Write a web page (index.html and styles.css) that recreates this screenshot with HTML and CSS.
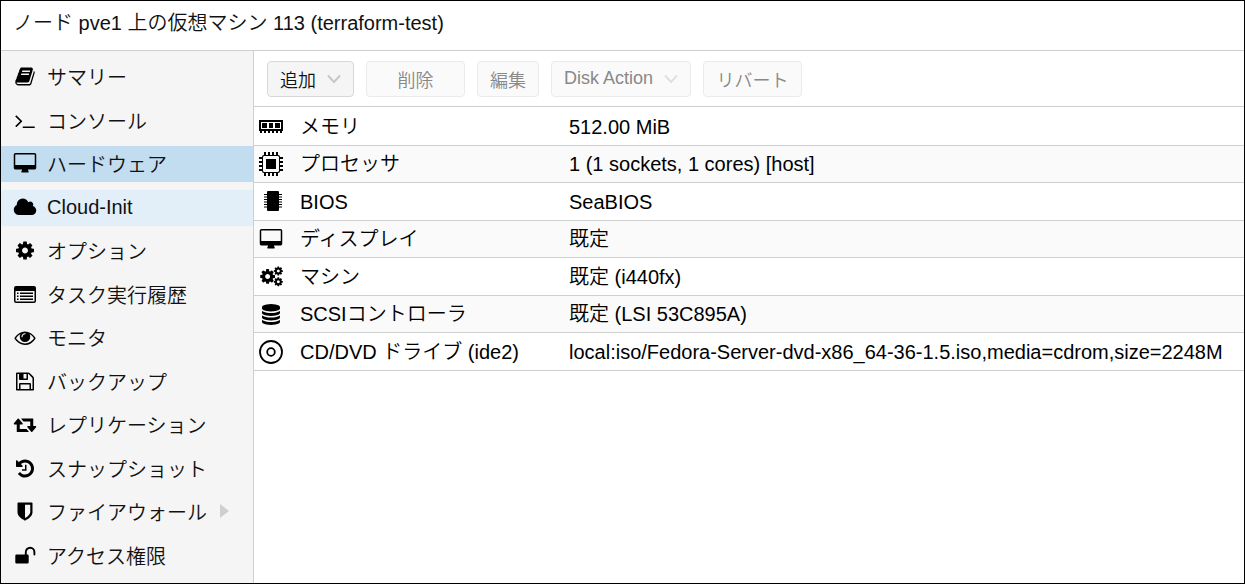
FILE: index.html
```html
<!DOCTYPE html>
<html lang="ja">

<head>
	<meta charset="utf-8">
	<title>pve1 - 113 (terraform-test)</title>
	<link rel="stylesheet" href="styles.css">
</head>

<body>

	<!-- icon sprite -->
	<svg class="sprite" aria-hidden="true">
		<symbol id="book" viewBox="-128 0 2048 1792"><path d="M1703 478q40 57 18 129l-275 906q-19 64-76.5 107.5t-122.5 43.5h-923q-77 0-148.5-53.5t-99.5-131.5q-24-67-2-127 0-4 3-27t4-37q1-8-3-21.5t-3-19.5q2-11 8-21t16.5-23.5 16.5-23.5q23-38 45-91.5t30-91.5q3-10 .5-30t-.5-28q3-11 17-28t17-23q21-36 42-92t25-90q1-9-2.5-32t.5-28q4-13 22-30.5t22-22.5q19-26 42.5-84.5t27.5-96.5q1-8-3-25.5t-2-26.5q2-8 9-18t18-23 17-21q8-12 16.5-30.5t15-35 16-36 19.5-32 26.5-23.5 36-11.5 47.5 5.5l-1 3q38-9 51-9h761q74 0 114 56t18 130l-274 906q-36 119-71.5 153.5t-128.5 34.5h-869q-27 0-38 15-11 16-1 43 24 70 144 70h923q29 0 56-15.5t35-41.5l300-987q7-22 5-57 38 15 59 43zm-1064 2q-4 13 2 22.5t20 9.5h608q13 0 25.5-9.5t16.5-22.5l21-64q4-13-2-22.5t-20-9.5h-608q-13 0-25.5 9.5t-16.5 22.5zm-83 256q-4 13 2 22.5t20 9.5h608q13 0 25.5-9.5t16.5-22.5l21-64q4-13-2-22.5t-20-9.5h-608q-13 0-25.5 9.5t-16.5 22.5z"/></symbol>
		<symbol id="terminal" viewBox="-128 0 2048 1792"><path d="M649 983l-466 466q-10 10-23 10t-23-10l-50-50q-10-10-10-23t10-23l393-393-393-393q-10-10-10-23t10-23l50-50q10-10 23-10t23 10l466 466q10 10 10 23t-10 23zm1079 457v64q0 14-9 23t-23 9h-960q-14 0-23-9t-9-23v-64q0-14 9-23t23-9h960q14 0 23 9t9 23z"/></symbol>
		<symbol id="desktop" viewBox="-64 0 2048 1792"><path d="M1792 992v-832q0-13-9.5-22.5t-22.5-9.5h-1600q-13 0-22.5 9.5t-9.5 22.5v832q0 13 9.5 22.5t22.5 9.5h1600q13 0 22.5-9.5t9.5-22.5zm128-832v1088q0 66-47 113t-113 47h-544q0 37 16 77.5t32 71 16 43.5q0 26-19 45t-45 19h-512q-26 0-45-19t-19-45q0-14 16-44t32-70 16-78h-544q-66 0-113-47t-47-113v-1088q0-66 47-113t113-47h1600q66 0 113 47t47 113z"/></symbol>
		<symbol id="cloud" viewBox="0 0 2048 1792"><path d="M1984 1152q0 159-112.5 271.5t-271.5 112.5h-1088q-185 0-316.5-131.5t-131.5-316.5q0-132 71-241.5t187-163.5q-2-28-2-43 0-212 150-362t362-150q158 0 286.5 88t187.5 230q70-62 166-62 106 0 181 75t75 181q0 75-41 138 129 30 213 134.5t84 239.5z"/></symbol>
		<symbol id="cog" viewBox="-128 0 2048 1792"><path id="gear" d="M1152 896q0-106-75-181t-181-75-181 75-75 181 75 181 181 75 181-75 75-181zm512-109v222q0 12-8 23t-20 13l-185 28q-19 54-39 91 35 50 107 138 10 12 10 25t-9 23q-27 37-99 108t-94 71q-12 0-26-9l-138-108q-44 23-91 38-16 136-29 186-7 28-36 28h-222q-14 0-24.5-8.5t-11.5-21.5l-28-184q-49-16-90-37l-141 107q-10 9-25 9-14 0-25-11-126-114-165-168-7-10-7-23 0-12 8-23 15-21 51-66.5t54-70.5q-27-50-41-99l-183-27q-13-2-21-12.5t-8-23.5v-222q0-12 8-23t19-13l186-28q14-46 39-92-40-57-107-138-10-12-10-24 0-10 9-23 26-36 98.5-107.5t94.5-71.5q13 0 26 10l138 107q44-23 91-38 16-136 29-186 7-28 36-28h222q14 0 24.5 8.5t11.5 21.5l28 184q49 16 90 37l142-107q9-9 24-9 13 0 25 10 129 119 165 170 7 8 7 22 0 12-8 23-15 21-51 66.5t-54 70.5q26 50 41 98l183 28q13 2 21 12.5t8 23.5z"/></symbol>
		<symbol id="cogs" viewBox="0 0 2048 1792">
			<use href="#gear" transform="translate(0 160) scale(.82)"/>
			<use href="#gear" transform="translate(1200 -20) scale(.5)"/>
			<use href="#gear" transform="translate(1200 900) scale(.5)"/>
		</symbol>
		<symbol id="list" viewBox="0 0 24 21"><path fill-rule="evenodd" d="M3 2h18q2 0 2 2v13q0 2-2 2H3q-2 0-2-2V4q0-2 2-2zm-.5 5v10q0 .6.6.6h17.8q.6 0 .6-.6V7zM4 8.500h1.500V10H4zm3 0h13V10H7zM4 11.500h1.500V13H4zm3 0h13V13H7zM4 14.500h1.500V16H4zm3 0h13V16H7z"/></symbol>
		<symbol id="eye" viewBox="-128 0 2048 1792"><path d="M1664 960q-152-236-381-353 61 104 61 225 0 185-131.5 316.500t-316.500 131.500-316.500-131.500-131.500-316.500q0-121 61-225-229 117-381 353 133 205 333.500 326.500t434.500 121.500 434.500-121.500 333.500-326.500zm-720-384q0-20-14-34t-34-14q-125 0-214.500 89.500t-89.500 214.500q0 20 14 34t34 14 34-14 14-34q0-86 61-147t147-61q20 0 34-14t14-34zm848 384q0 34-20 69-140 230-376.500 368.500t-499.500 138.500-499.500-139-376.500-368q-20-35-20-69t20-69q140-229 376.500-368t499.500-139 499.500 139 376.500 368q20 35 20 69z"/></symbol>
		<symbol id="floppy" viewBox="-128 0 2048 1792"><path d="M512 1536h768v-384h-768v384zm896 0h128v-896q0-14-10-38.500t-20-34.500l-281-281q-10-10-34-20t-39-10v416q0 40-28 68t-68 28h-576q-40 0-68-28t-28-68v-416h-128v1280h128v-416q0-40 28-68t68-28h832q40 0 68 28t28 68v416zm-384-928v-320q0-13-9.500-22.500t-22.500-9.500h-192q-13 0-22.500 9.500t-9.500 22.500v320q0 13 9.500 22.500t22.500 9.500h192q13 0 22.500-9.500t9.500-22.500zm640 32v928q0 40-28 68t-68 28h-1344q-40 0-68-28t-28-68v-1344q0-40 28-68t68-28h928q40 0 88 20t76 48l280 280q28 28 48 76t20 88z"/></symbol>
		<symbol id="retweet" viewBox="-64 0 2048 1792"><path d="M1280 1504q0 13-9.500 22.500t-22.500 9.500h-960q-8 0-13.500-2t-9-7-5.500-8-3-11.500-1-11.500v-600h-192q-26 0-45-19t-19-45q0-24 15-41l320-384q19-22 49-22t49 22l320 384q15 17 15 41 0 26-19 45t-45 19h-192v384h576q16 0 25 11l160 192q7 10 7 21zm640-416q0 24-15 41l-320 384q-20 23-49 23t-49-23l-320-384q-15-17-15-41 0-26 19-45t45-19h192v-384h-576q-16 0-25-12l-160-192q-7-9-7-20 0-13 9.500-22.500t22.500-9.500h960q8 0 13.500 2t9 7 5.500 8 3 11.500 1 11.500v600h192q26 0 45 19t19 45z"/></symbol>
		<symbol id="history" viewBox="-128 0 2048 1792"><path d="M1664 896q0 156-61 298t-164 245-245 164-298 61q-172 0-327-72.500t-264-204.500q-7-10-6.500-22.500t8.500-20.500l137-138q10-9 25-9 16 2 23 12 73 95 179 147t225 52q104 0 198.500-40.500t163.500-109.500 109.500-163.500 40.500-198.500-40.500-198.500-109.500-163.500-163.500-109.500-198.500-40.500q-98 0-188 35.500t-160 101.500l137 138q31 30 14 69-17 40-59 40h-448q-26 0-45-19t-19-45v-448q0-42 40-59 39-17 69 14l130 129q107-101 244.500-156.500t284.500-55.500q156 0 298 61t245 164 164 245 61 298zm-640-288v448q0 14-9 23t-23 9h-320q-14 0-23-9t-9-23v-64q0-14 9-23t23-9h224v-352q0-14 9-23t23-9h64q14 0 23 9t9 23z"/></symbol>
		<symbol id="shield" viewBox="-128 0 2048 1792"><path d="M1344 960v-640h-448v1137q119-63 213-137 235-184 235-360zm192-768v768q0 86-33.500 170.500t-83 150-118 127.500-126.500 103-121 77.500-89.500 49.500-42.500 20q-12 6-26 6t-26-6q-16-7-42.500-20t-89.500-49.500-121-77.500-126.500-103-118-127.500-83-150-33.500-170.500v-768q0-26 19-45t45-19h1152q26 0 45 19t19 45z"/></symbol>
		<symbol id="unlock" viewBox="0 0 24 21"><path d="M3.500 9.500h11q1.200 0 1.200 1.200v6.600q0 1.200-1.200 1.200h-11q-1.200 0-1.200-1.200v-6.600q0-1.200 1.200-1.200z"/><path d="M12.800 10V7a4.300 4.300 0 0 1 8.600 0v2.500" fill="none" stroke="#000" stroke-width="1.900" stroke-linecap="round"/></symbol>
		<symbol id="database" viewBox="-128 0 2048 1792"><path d="M896 768q237 0 443-43t325-127v170q0 69-103 128t-280 93.500-385 34.500-385-34.500-280-93.500-103-128v-170q119 84 325 127t443 43zm0 768q237 0 443-43t325-127v170q0 69-103 128t-280 93.500-385 34.500-385-34.500-280-93.500-103-128v-170q119 84 325 127t443 43zm0-384q237 0 443-43t325-127v170q0 69-103 128t-280 93.500-385 34.500-385-34.500-280-93.500-103-128v-170q119 84 325 127t443 43zm0-1152q208 0 385 34.500t280 93.500 103 128v128q0 69-103 128t-280 93.500-385 34.500-385-34.500-280-93.500-103-128v-128q0-69 103-128t280-93.500 385-34.500z"/></symbol>
		<symbol id="memory" viewBox="0 0 24 24"><path fill-rule="evenodd" d="M0 5h24v11h-1v2h-2v-2h-2v2h-2v-2h-2v2h-2v-2h-2v2H9v-2H7v2H5v-2H3v2H1v-2H0zm2 2v7h20V7zm1 1h5v5H3zm7 0h4v5h-4zm6 0h5v5h-5z"/></symbol>
		<symbol id="cpu" viewBox="0 0 24 24"><path fill-rule="evenodd" d="M5 3h14q2 0 2 2v14q0 2-2 2H5q-2 0-2-2V5q0-2 2-2zm0 1-1 1v14l1 1h14l1-1V5l-1-1zM7 7h10v10H7z"/><path d="M6 0v4m4-4v4m4-4v4m4-4v4M6 20v4m4-4v4m4-4v4m4-4v4M0 6h4m-4 4h4m-4 4h4m-4 4h4m16-12h4m-4 4h4m-4 4h4m-4 4h4" stroke="#000" stroke-width="2"/></symbol>
		<symbol id="chip" viewBox="0 0 24 24"><rect x="8" y="1" width="12" height="20" rx="1"/><path d="M5 4.500h18M5 7h18M5 9.500h18M5 12h18M5 14.500h18M5 17h18" stroke="#000" stroke-width="1.100"/></symbol>
		<symbol id="disc" viewBox="0 0 24 24"><g fill="none" stroke="#000" stroke-width="1.800"><circle cx="12" cy="12" r="11"/><circle cx="12" cy="12" r="3.800"/></g></symbol>
		<symbol id="down" viewBox="0 0 14 10"><path d="M1 1.500l6 6.500 6-6.500" fill="none" stroke="currentColor" stroke-width="2"/></symbol>
		<symbol id="right" viewBox="0 0 9 14"><path d="M0 0l9 7-9 7z" fill="currentColor"/></symbol>
	</svg>

	<div class="wrapper">
		<h1 class="title">ノード pve1 上の仮想マシン 113 (terraform-test)</h1>

		<div class="main">
			<nav class="side">
				<a href="#"><svg class="icon"><use href="#book"/></svg>サマリー</a>
				<a href="#"><svg class="icon"><use href="#terminal"/></svg>コンソール</a>
				<a href="#" class="active"><svg class="icon"><use href="#desktop"/></svg>ハードウェア</a>
				<a href="#" class="over"><svg class="icon"><use href="#cloud"/></svg>Cloud-Init</a>
				<a href="#"><svg class="icon"><use href="#cog"/></svg>オプション</a>
				<a href="#"><svg class="icon"><use href="#list"/></svg>タスク実行履歴</a>
				<a href="#"><svg class="icon"><use href="#eye"/></svg>モニタ</a>
				<a href="#"><svg class="icon"><use href="#floppy"/></svg>バックアップ</a>
				<a href="#"><svg class="icon"><use href="#retweet"/></svg>レプリケーション</a>
				<a href="#"><svg class="icon"><use href="#history"/></svg>スナップショット</a>
				<a href="#"><svg class="icon"><use href="#shield"/></svg>ファイアウォール<svg class="more"><use href="#right"/></svg></a>
				<a href="#"><svg class="icon"><use href="#unlock"/></svg>アクセス権限</a>
			</nav>

			<div class="content">
				<div class="toolbar">
					<button class="btn">追加<svg class="arrow"><use href="#down"/></svg></button>
					<button class="btn wide" disabled>削除</button>
					<button class="btn" disabled>編集</button>
					<button class="btn" disabled>Disk Action<svg class="arrow"><use href="#down"/></svg></button>
					<button class="btn wide" disabled>リバート</button>
				</div>

				<table class="grid">
					<tr>
						<th scope="row"><div class="name"><svg class="dev"><use href="#memory"/></svg>メモリ</div></th>
						<td>512.00 MiB</td>
					</tr>
					<tr>
						<th scope="row"><div class="name"><svg class="dev"><use href="#cpu"/></svg>プロセッサ</div></th>
						<td>1 (1 sockets, 1 cores) [host]</td>
					</tr>
					<tr>
						<th scope="row"><div class="name"><svg class="dev"><use href="#chip"/></svg>BIOS</div></th>
						<td>SeaBIOS</td>
					</tr>
					<tr>
						<th scope="row"><div class="name"><svg class="icon"><use href="#desktop"/></svg>ディスプレイ</div></th>
						<td>既定</td>
					</tr>
					<tr>
						<th scope="row"><div class="name"><svg class="icon"><use href="#cogs"/></svg>マシン</div></th>
						<td>既定 (i440fx)</td>
					</tr>
					<tr>
						<th scope="row"><div class="name"><svg class="icon"><use href="#database"/></svg>SCSIコントローラ</div></th>
						<td>既定 (LSI 53C895A)</td>
					</tr>
					<tr>
						<th scope="row"><div class="name"><svg class="dev"><use href="#disc"/></svg>CD/DVD ドライブ (ide2)</div></th>
						<td>local:iso/Fedora-Server-dvd-x86_64-36-1.5.iso,media=cdrom,size=2248M</td>
					</tr>
				</table>
			</div>
		</div>
	</div>

</body>

</html>
```

FILE: styles.css
```css
* {
	padding: 0px;
	margin: 0px;
	box-sizing: border-box;
}

body {
	font-family: "Liberation Sans", "Noto Sans CJK JP", sans-serif;
	font-size: 20px;
	font-weight: 350;
	color: #000;
	background-color: #fff;
}

.sprite {
	position: absolute;
	width: 0px;
	height: 0px;
}

.wrapper {
	display: flex;
	flex-direction: column;
	min-height: 100vh;
	border: 1px solid #000;
}

.title {
	height: 50px;
	padding-left: 12px;
	font-size: 20px;
	font-weight: 350;
	line-height: 44px;
	color: #111;
	border-bottom: 1px solid #cfcfcf;
}

.main {
	display: flex;
	flex: 1;
}

/* left menu */
.side {
	width: 253px;
	padding-top: 8px;
	background-color: #f5f5f5;
	border-right: 1px solid #cfcfcf;
}

.side a {
	display: flex;
	align-items: center;
	gap: 10px;
	height: 36px;
	margin-bottom: 7px;
	padding: 0px 0px 2px 12px;
	color: #111;
	text-decoration: none;
	white-space: nowrap;
}

.side a:nth-child(odd) {
	margin-bottom: 8px;
}

.side .active {
	background-color: #c2ddf0;
}

.side .over {
	background-color: #e2eff8;
}

.icon {
	width: 24px;
	height: 21px;
	flex: none;
	fill: #000;
}

.more {
	width: 9px;
	height: 14px;
	margin-left: 3px;
	color: #cfcfcf;
}

/* right panel */
.content {
	flex: 1;
	min-width: 0px;
}

.toolbar {
	display: flex;
	gap: 12px;
	height: 56px;
	padding: 10px 13px;
	border-bottom: 1px solid #cfcfcf;
}

.btn {
	display: flex;
	align-items: center;
	justify-content: center;
	gap: 11px;
	height: 36px;
	padding: 0px 12px 1px;
	font-family: inherit;
	font-size: 18px;
	font-weight: 350;
	color: #111;
	background-color: #f5f5f5;
	border: 1px solid #d8d8d8;
	border-radius: 4px;
}

.btn:disabled {
	color: #888;
	background-color: #fafafa;
	border-color: #ebebeb;
}

.wide {
	min-width: 99px;
}

.arrow {
	width: 14px;
	height: 10px;
	color: #c8c8c8;
}

.btn:disabled .arrow {
	color: #e0e0e0;
}

.grid {
	width: 100%;
	margin-top: 1px;
	border-spacing: 0px;
	line-height: 30px;
}

.grid th,
.grid td {
	height: 38px;
	border-bottom: 1px solid #cfcfcf;
	font-weight: 350;
	text-align: left;
}

.grid tr:nth-child(even) th,
.grid tr:nth-child(even) td {
	height: 37px;
	background-color: #fafafa;
}

.grid th {
	width: 315px;
	padding-left: 5px;
}

.name {
	display: flex;
	align-items: center;
	gap: 17px;
}

.dev {
	width: 24px;
	height: 24px;
	flex: none;
}
```
